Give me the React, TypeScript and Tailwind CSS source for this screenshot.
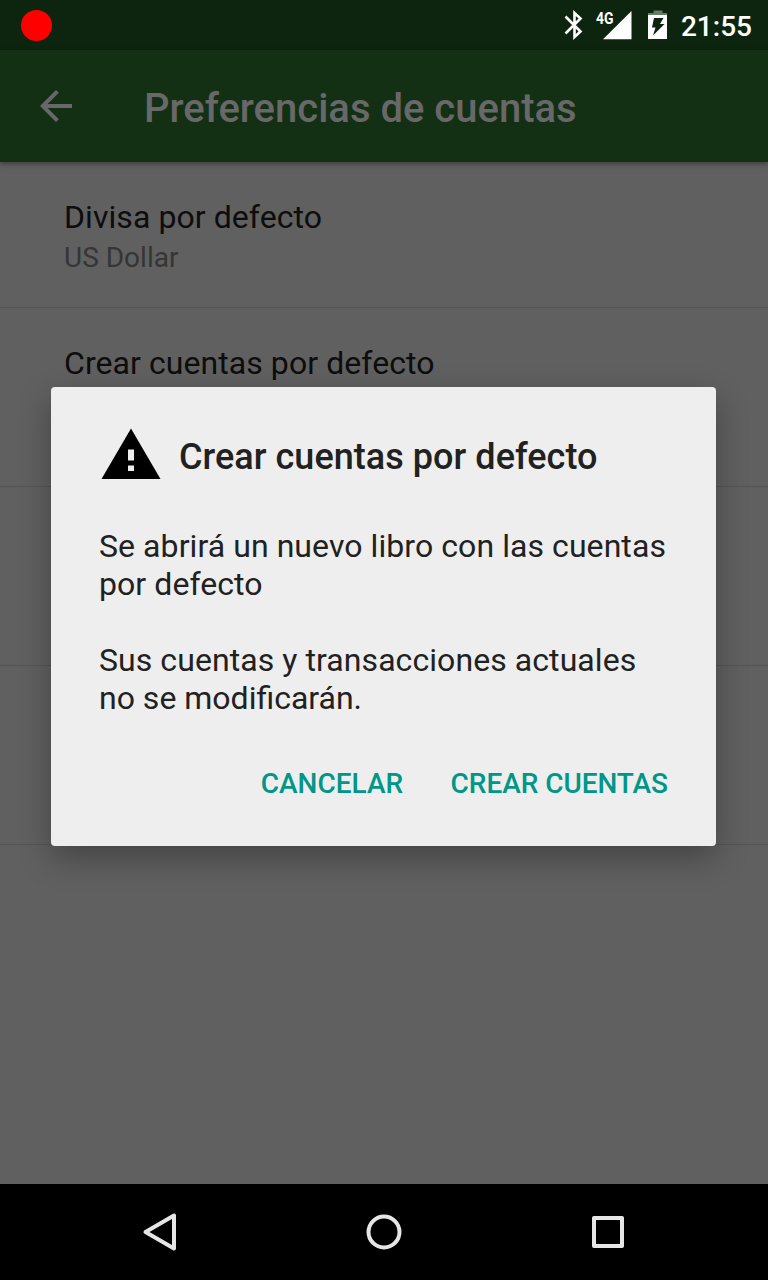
import React from "react";

function StatusBar() {
  return (
    <header className="flex h-[50px] shrink-0 items-center bg-[#0d250f] pl-[20.500px] pr-4">
      <span className="h-[31px] w-[31px] rounded-full bg-[#ff0000]" />
      <div className="ml-auto flex items-center text-white">
        <svg className="h-[50px] w-[120px]" viewBox="0 0 120 50" fill="none">
          <path d="M4.500 16.500 L19.500 31.500 L13.500 37 V13 L19.500 18.500 L4.500 33.500" stroke="#fff" strokeWidth="2.6" />
          <path d="M70.500 11 V39.300 H42 Z" fill="#fff" />
          <text x="35" y="23.500" fill="#fff" fontSize="17" fontWeight="700" textLength="17.500" lengthAdjust="spacingAndGlyphs">4G</text>
          <path d="M92.500 10.500 H101.500 V13 H106 V16 H87 V13 H92.500 Z" fill="#687a69" />
          <path d="M87 15 H106 V39 H87 Z" fill="#fff" />
          <path d="M93 18 H102.500 L99 24 H103.500 L92 35.500 L94.500 27.500 H91 Z" fill="#0d250f" />
        </svg>
        <span className="pt-1 text-[28px] font-medium leading-[46px]">21:55</span>
      </div>
    </header>
  );
}

function Toolbar() {
  return (
    <div className="z-10 flex h-28 shrink-0 items-center bg-[#133014] pl-8 text-[#686868] shadow-[0_2px_5px_rgba(0,0,0,0.35)]">
      <svg className="h-12 w-12" viewBox="0 0 24 24" fill="currentColor">
        <path d="M20 11H7.830l5.590-5.590L12 4l-8 8 8 8 1.410-1.410L7.830 13H20v-2z" />
      </svg>
      <h1 className="ml-16 pt-1.5 text-[40px] font-medium leading-[48px]">Preferencias de cuentas</h1>
    </div>
  );
}

function Preferences() {
  return (
    <main className="flex-1 bg-[#606060]">
      <section className="h-[146px] border-b border-[#545454] px-16 pt-9">
        <h2 className="text-[32px] leading-[38px] tracking-[0.07px] text-[#0d0d0d]">Divisa por defecto</h2>
        <p className="mt-[5px] text-[28px] leading-[34px] text-[#353535]">US Dollar</p>
      </section>
      <section className="h-[179px] border-b border-[#545454] px-16 pt-9">
        <h2 className="text-[32px] leading-[38px] tracking-[0.07px] text-[#0d0d0d]">Crear cuentas por defecto</h2>
      </section>
      <section className="h-[179px] border-b border-[#545454]" />
      <section className="h-[179px] border-b border-[#545454]" />
    </main>
  );
}

function Dialog() {
  return (
    <div
      role="dialog"
      className="absolute left-[51px] top-[387px] z-20 flex h-[459px] w-[665px] flex-col rounded-[4px] bg-[#eeeeee] px-12 pt-9 text-[#212121] shadow-[0_12px_32px_rgba(0,0,0,0.3)]"
    >
      <div className="flex h-16 items-center">
        <svg className="h-16 w-16" viewBox="0 0 64 64">
          <path d="M32 5.500 L61.500 56 H2.500 Z" fill="#000" />
          <path d="M29 26.500 H35 V37.500 H29 Z M29 42.500 H35 V48 H29 Z" fill="#eee" />
        </svg>
        <h2 className="ml-4 pt-1 text-[36px] font-medium leading-[42px] tracking-[0.04px]">Crear cuentas por defecto</h2>
      </div>
      <div className="mt-10 whitespace-nowrap text-[32px] leading-[38px] tracking-[0.07px]">
        <p>Se abrirá un nuevo libro con las cuentas<br />por defecto</p>
        <p className="mt-[38px]">Sus cuentas y transacciones actuales<br /><span className="tracking-normal">no se modificarán.</span></p>
      </div>
      <div className="mt-[50px] flex justify-end gap-[47.500px] whitespace-nowrap text-[28px] font-medium leading-[34px] text-[#009688]">
        <button>CANCELAR</button>
        <button className="tracking-[-0.05px]">CREAR CUENTAS</button>
      </div>
    </div>
  );
}

function NavigationBar() {
  return (
    <nav className="flex h-24 shrink-0 items-center justify-center gap-32 bg-black">
      <svg className="h-24 w-24" viewBox="0 0 96 96" fill="none" stroke="#e6e6e6" strokeWidth="4" strokeLinejoin="round">
        <path d="M33.500 48 L62 31.500 V64.500 Z" />
      </svg>
      <svg className="h-24 w-24" viewBox="0 0 96 96" fill="none" stroke="#e6e6e6" strokeWidth="4">
        <circle cx="48" cy="48" r="15.500" />
      </svg>
      <svg className="h-24 w-24" viewBox="0 0 96 96" fill="none" stroke="#e6e6e6" strokeWidth="4" strokeLinejoin="round">
        <path d="M34 34 H62 V62 H34 Z" />
      </svg>
    </nav>
  );
}

export default function App() {
  return (
    <div className="relative flex h-[1280px] w-[768px] flex-col overflow-hidden font-['Roboto',sans-serif]">
      <StatusBar />
      <Toolbar />
      <Preferences />
      <Dialog />
      <NavigationBar />
    </div>
  );
}
